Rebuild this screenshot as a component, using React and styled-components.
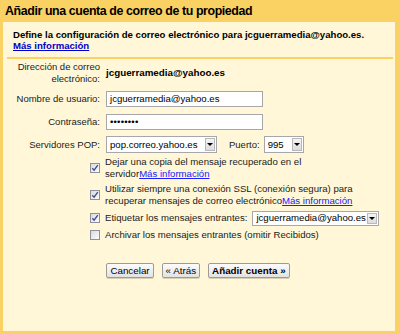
import React from "react";
import styled, { createGlobalStyle } from "styled-components";

const GlobalStyle = createGlobalStyle`
  html, body {
    margin: 0;
    padding: 0;
    background: #fff7d7;
  }
  body {
    font-family: "Liberation Sans", Arial, sans-serif;
  }
`;

const Frame = styled.div`
  width: 400px;
  height: 334px;
  box-sizing: border-box;
  border: solid #fad163;
  border-width: 0 5px 3px 3px;
  background: #fff7d7;
  display: flex;
  flex-direction: column;
`;

const Header = styled.div`
  height: 22px;
  background: #fad163;
  padding-left: 2px;
  font-size: 12.4px;
  letter-spacing: -0.4px;
  font-weight: bold;
  line-height: 22px;
  color: #000;
`;

const Intro = styled.div`
  margin: 0 2px 0 4px;
  padding: 7px 6px 6px;
  border-bottom: 2px solid #fad163;
  font-size: 9.6px;
  font-weight: bold;
  line-height: 11px;
  color: #000;
`;

const Link = styled.a`
  color: ${(p) => (p.$plain ? "#2020ff" : "#0000cc")};
  text-decoration: underline;
  cursor: pointer;
`;

const FormGrid = styled.div`
  display: grid;
  grid-template-columns: 97px auto;
  column-gap: 6px;
  row-gap: 6.5px;
  align-items: center;
  padding-top: 1.5px;
  font-size: 9.5px;
  color: #222;
`;

const Label = styled.div`
  text-align: right;
  line-height: 12px;
`;

const Value = styled.div`
  font-weight: bold;
  color: #000;
  font-size: 9.8px;
`;

const Inline = styled.div`
  display: flex;
  align-items: center;
  gap: ${(p) => p.$gap || 12}px;
`;

const TextInput = styled.div`
  width: 157px;
  height: 16px;
  box-sizing: border-box;
  border: 1px solid #a7a6aa;
  background: #fff;
  padding: 0 3px;
  font-size: 9.6px;
  line-height: 14px;
  color: #000;
  letter-spacing: ${(p) => (p.$dots ? "0.2px" : "0")};
`;

const SelectBox = styled.div`
  display: inline-flex;
  align-items: stretch;
  flex: none;
  width: ${(p) => p.$width}px;
  height: ${(p) => p.$height || 17}px;
  box-sizing: border-box;
  border: 1px solid #a7a6aa;
  background: #fff;
  font-size: 9.6px;
  color: #000;
`;

const SelectText = styled.span`
  flex: 1;
  padding-left: 3px;
  display: flex;
  align-items: center;
  white-space: nowrap;
  overflow: hidden;
`;

const SelectArrow = styled.span`
  width: 10px;
  margin: 1px;
  box-sizing: border-box;
  border: 1px solid #b9b9b9;
  background: linear-gradient(#f4f4f4, #dcdcdc);
  display: flex;
  align-items: center;
  justify-content: center;

  &::after {
    content: "";
    border-left: 3px solid transparent;
    border-right: 3px solid transparent;
    border-top: 3px solid #000;
  }
`;

const Options = styled.div`
  display: flex;
  flex-direction: column;
  gap: 3px;
  padding: 3px 0 0 87px;
  font-size: 9.6px;
  color: #222;
`;

const Option = styled.div`
  display: flex;
  align-items: center;
  gap: 5px;
  min-height: ${(p) => p.$tall || 12}px;
`;

const OptionText = styled.div`
  width: 250px;
  line-height: 12px;
`;

const OptionLine = styled.div`
  display: flex;
  align-items: center;
  gap: 5px;
  white-space: nowrap;
  line-height: 12px;
`;

const Box = styled.span`
  flex: none;
  width: 10px;
  height: 10px;
  box-sizing: border-box;
  border: 1px solid #8f8f9d;
  background: linear-gradient(135deg, #dcdcdc, #fbfbfb);
  display: flex;
  align-items: center;
  justify-content: center;
`;

const Buttons = styled.div`
  display: flex;
  justify-content: center;
  gap: 8px;
  padding-top: 22px;
  padding-right: 2px;
`;

const Button = styled.button`
  height: 15px;
  padding: 0 3px;
  border: 1px solid #9b9b9b;
  border-radius: 2px;
  background: linear-gradient(#fcfcfc, #e2e2e2);
  font-family: "Liberation Sans", Arial, sans-serif;
  font-size: 9.8px;
  font-weight: ${(p) => (p.$primary ? "bold" : "normal")};
  color: #000;
  line-height: 13px;
  box-shadow: 0 1px 0 #d8d0b0;
`;

const Check = ({ checked }) => (
  <Box>
    {checked && (
      <svg width="8" height="8" viewBox="0 0 8 8">
        <path d="M1.3 4.2 L3.1 6.2 L6.8 1.2" fill="none" stroke="#3d4f8a" strokeWidth="1.4" />
      </svg>
    )}
  </Box>
);

const Select = ({ value, width, height }) => (
  <SelectBox $width={width} $height={height}>
    <SelectText>{value}</SelectText>
    <SelectArrow />
  </SelectBox>
);

export default function App() {
  return (
    <>
      <GlobalStyle />
      <Frame>
        <Header>Añadir una cuenta de correo de tu propiedad</Header>
        <Intro>
          Define la configuración de correo electrónico para jcguerramedia@yahoo.es.
          <br />
          <Link>Más información</Link>
        </Intro>

        <FormGrid>
          <Label>
            Dirección de correo
            <br />
            electrónico:
          </Label>
          <Value>jcguerramedia@yahoo.es</Value>

          <Label>Nombre de usuario:</Label>
          <TextInput>jcguerramedia@yahoo.es</TextInput>

          <Label>Contraseña:</Label>
          <TextInput $dots>••••••••</TextInput>

          <Label>Servidores POP:</Label>
          <Inline>
            <Select value="pop.correo.yahoo.es" width={111} height={17} />
            <Inline $gap={4}>
              Puerto:
              <Select value="995" width={40} height={17} />
            </Inline>
          </Inline>
        </FormGrid>

        <Options>
          <Option $tall={24}>
            <Check checked />
            <OptionText>
              Dejar una copia del mensaje recuperado en el
              <br />
              servidor<Link $plain>Más información</Link>
            </OptionText>
          </Option>
          <Option $tall={24}>
            <Check checked />
            <OptionText>
              Utilizar siempre una conexión SSL (conexión segura) para
              <br />
              recuperar mensajes de correo electrónico<Link $plain>Más información</Link>
            </OptionText>
          </Option>
          <Option $tall={16}>
            <Check checked />
            <OptionLine>
              Etiquetar los mensajes entrantes:
              <Select value="jcguerramedia@yahoo.es" width={127} height={15} />
            </OptionLine>
          </Option>
          <Option>
            <Check />
            <OptionLine>Archivar los mensajes entrantes (omitir Recibidos)</OptionLine>
          </Option>
        </Options>

        <Buttons>
          <Button>Cancelar</Button>
          <Button>« Atrás</Button>
          <Button $primary>Añadir cuenta »</Button>
        </Buttons>
      </Frame>
    </>
  );
}
